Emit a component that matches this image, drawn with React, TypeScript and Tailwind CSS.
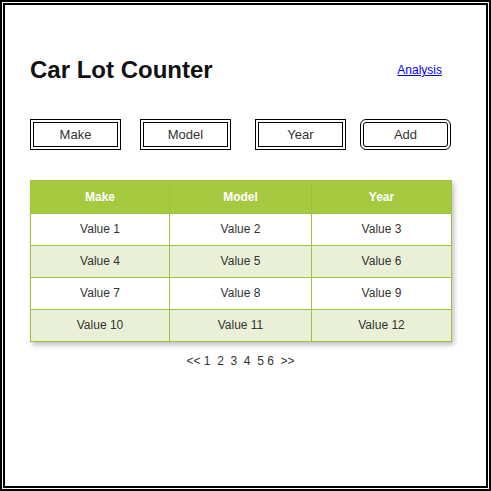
import React from "react";

export default function App() {
  const rows = [
    ["Value 1", "Value 2", "Value 3"],
    ["Value 4", "Value 5", "Value 6"],
    ["Value 7", "Value 8", "Value 9"],
    ["Value 10", "Value 11", "Value 12"],
  ];
  return (
    <div
      className="w-[491px] h-[491px] border-[5px] border-double border-black bg-white text-[#222]"
      style={{ fontFamily: '"Liberation Sans", Arial, sans-serif' }}
    >
      <div className="flex items-center justify-between pt-[50px] pl-[25px] pr-[44px]">
        <h1 className="text-[24px] font-bold text-[#111] leading-[30px]">Car Lot Counter</h1>
        <a href="#" className="text-[12px] text-[#0000ee] underline">Analysis</a>
      </div>
      <div className="flex pl-[25px] mt-[34px] h-[31px]">
        <button className="w-[91px] h-[31px] border-[4px] border-double border-black text-[13px] text-[#333] leading-none pb-[1px]">Make</button>
        <button className="ml-[19px] w-[91px] h-[31px] border-[4px] border-double border-black text-[13px] text-[#333] leading-none pb-[1px]">Model</button>
        <button className="ml-[24px] w-[91px] h-[31px] border-[4px] border-double border-black text-[13px] text-[#333] leading-none pb-[1px]">Year</button>
        <button className="ml-[14px] w-[91px] h-[31px] border-[4px] border-double border-black rounded-[6px] text-[13px] text-[#333] leading-none pb-[1px]">Add</button>
      </div>
      <div className="pl-[25px] mt-[30px]">
        <table className="w-[421px] border-collapse border border-[#9cc33a] shadow-[2px_3px_5px_rgba(0,0,0,0.25)] text-[12px] table-fixed">
          <colgroup>
            <col className="w-[139px]" />
            <col className="w-[142px]" />
            <col className="w-[140px]" />
          </colgroup>
          <thead>
            <tr className="bg-[#a6c93f] h-[33px]">
              <th className="border border-[#9cc33a] text-white font-bold">Make</th>
              <th className="border border-[#9cc33a] text-white font-bold">Model</th>
              <th className="border border-[#9cc33a] text-white font-bold">Year</th>
            </tr>
          </thead>
          <tbody>
            {rows.map((r, i) => (
              <tr key={i} className={i % 2 === 1 ? "bg-[#e9f0d6] h-[32px]" : "bg-white h-[32px]"}>
                {r.map((c, j) => (
                  <td key={j} className="border border-[#9cc33a] text-center text-[#333] pb-[1px]">{c}</td>
                ))}
              </tr>
            ))}
          </tbody>
        </table>
      </div>
      <div className="flex justify-center mt-[10px] text-[12px] text-[#333] pr-[10px]">
        <span>&lt;&lt; 1&nbsp; 2&nbsp; 3&nbsp; 4&nbsp; 5 6&nbsp; &gt;&gt;</span>
      </div>
    </div>
  );
}
